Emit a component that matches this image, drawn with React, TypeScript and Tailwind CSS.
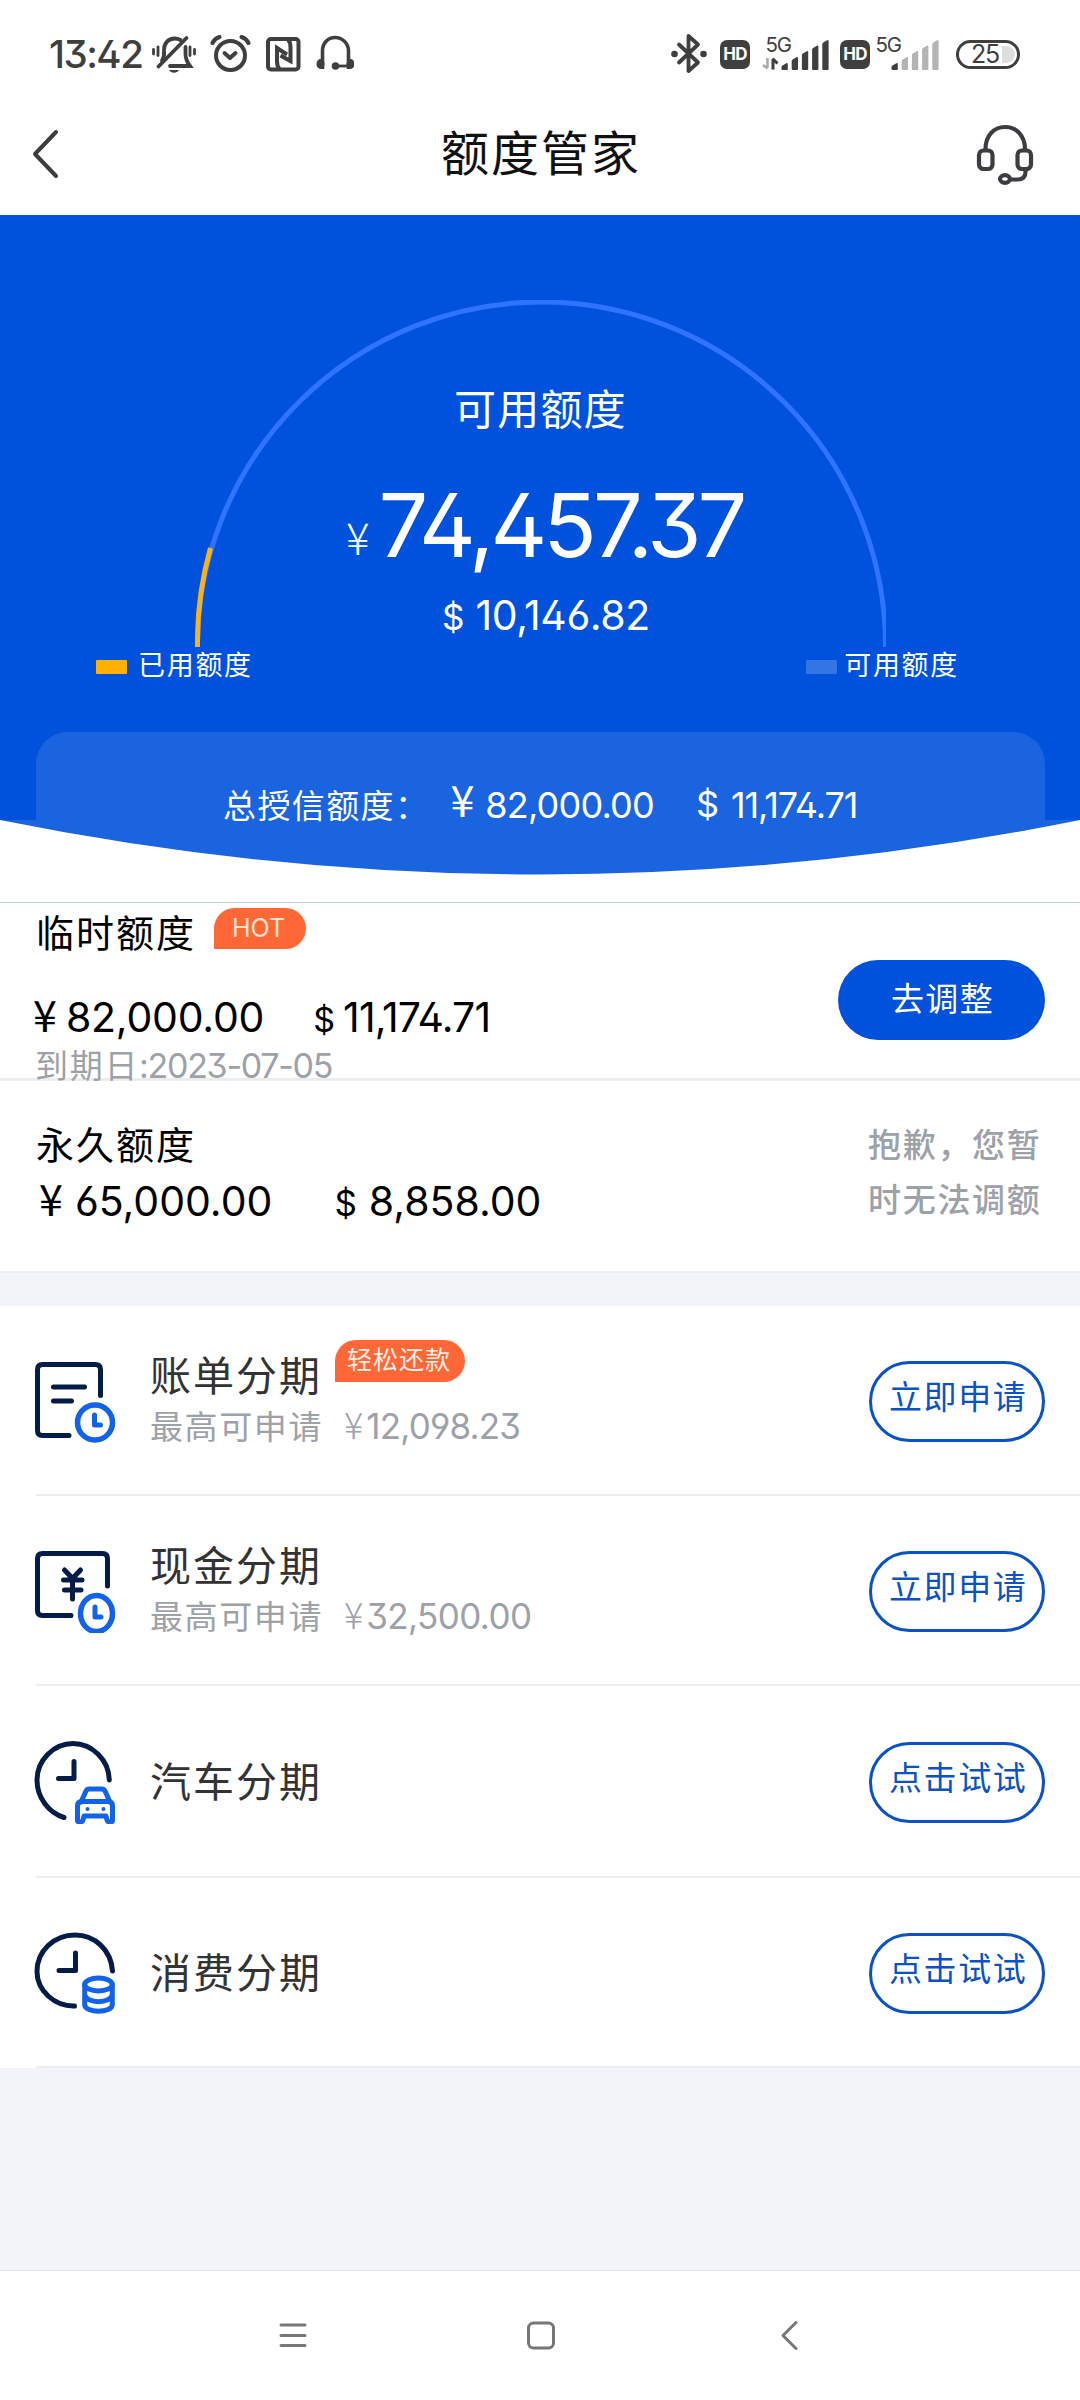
import type { ReactNode } from 'react';

interface Plan {
  title: string;
  limit?: string;
  limitClass?: string;
  badge?: string;
  action: string;
  rowClass: string;
  icon: ReactNode;
}

const NAVY = '#051c48';
const BLUE = '#1263ea';

function Yen({ className = '' }: { className?: string }) {
  return <span className={`font-['Noto_Sans_CJK_SC',sans-serif] leading-none tracking-normal ${className}`}>¥</span>;
}

function Dollar({ className = '' }: { className?: string }) {
  return <span className={`leading-none tracking-normal ${className}`}>$</span>;
}

function SignalBars({ active, arrows }: { active: number; arrows?: boolean }) {
  const tops = [33, 27, 21, 15.5, 10];
  return (
    <svg className="h-12 w-[67px] shrink-0" viewBox="0 0 67 48">
      <text x="3.5" y="22" fontSize="20.5" letterSpacing="-1.2" fill="#3f3f3f" fontFamily="Inter, sans-serif">
        5G
      </text>
      {arrows && (
        <>
          <path d="M5.5 28v9.500M5.500 38.500l-4.500-3.500" stroke="#aaa" strokeWidth="2.600" fill="none" />
          <path d="M11 39.500V29M10.500 28.500l5 5" stroke="#3f3f3f" strokeWidth="3" fill="none" />
        </>
      )}
      {tops.map((top, i) => {
        const x = 19.5 + i * 10.2;
        return (
          <path
            key={top}
            d={`M${x} ${top + 4}q0-1 1-1.500l3.800-2.300q1.500-.6 1.500 1V39q0 1-1 1h-4.300q-1 0-1-1z`}
            fill={i < active ? '#3f3f3f' : '#b4b4b4'}
          />
        );
      })}
    </svg>
  );
}

function HdBadge() {
  return (
    <span className="flex h-[29px] w-[30px] shrink-0 items-center justify-center rounded-[7px] bg-[#3f3f3f] text-[17px] leading-none font-bold tracking-[-0.8px] text-white">
      HD
    </span>
  );
}

function StatusBar() {
  return (
    <div className="flex h-[108px] items-center pr-[60px] pl-[49px] text-[#3f3f3f]">
      <span className="w-[101px] text-[38.5px] leading-none font-medium tracking-[-1.5px]">13:42</span>
      <svg className="h-12 w-12 shrink-0" viewBox="0 0 48 48" fill="none" stroke="currentColor" strokeWidth="3.800" strokeLinecap="round">
        <path d="M14 25v-5c0-7 4.500-11.500 10.500-11.500 2.500 0 4.500.7 6 1.500" />
        <path d="M35.500 17v7c0 5 1.500 8 4.500 12H20" />
        <path d="M8.500 36.500 36.500 8" />
        <path d="M14 24c0 3-1 5-2 6.500" />
        <path d="M19 40h10c-2 3.500-8 3.500-10 0z" fill="currentColor" stroke="none" />
        <path d="M3.500 19.500v4.500M8 17v8.500M40 17v8.500M44.500 19.500v4.500" strokeWidth="2.800" />
      </svg>
      <svg className="ml-3 h-12 w-[41px] shrink-0" viewBox="0 0 41 48" fill="none" stroke="currentColor" strokeWidth="4" strokeLinecap="round">
        <circle cx="20.500" cy="25.500" r="14.500" />
        <path d="m14.500 23 5.500 5 5.500-5" strokeLinejoin="round" />
        <path d="M2.500 13c1.500-3 3.500-5 7-6M38.500 13c-1.500-3-3.500-5-7-6" />
      </svg>
      <svg className="ml-[15px] h-12 w-[35px] shrink-0" viewBox="0 0 35 48" fill="none" stroke="currentColor" strokeWidth="4">
        <rect x="2" y="9" width="30.500" height="30.500" rx="3" />
        <path d="M13.500 39c-2-2-2.500-5-2.500-8V18l10 6.500" />
        <path d="M22 9.500c2 2 2.500 5 2.500 8V31l-10-5.500" />
      </svg>
      <svg className="ml-[15px] h-12 w-[38px] shrink-0" viewBox="0 0 38 48" fill="none" stroke="currentColor" strokeWidth="3.600">
        <path d="M6.500 39V21C6.500 13 12 7.500 19 7.500S32.500 13 32.500 21v18" />
        <ellipse cx="4.500" cy="34" rx="4" ry="5" fill="currentColor" stroke="none" />
        <ellipse cx="34.500" cy="34" rx="4" ry="5" fill="currentColor" stroke="none" />
        <circle cx="19.500" cy="36" r="3.800" fill="currentColor" stroke="none" />
        <path d="M19 36h14" strokeWidth="2.800" />
      </svg>

      <svg className="ml-auto h-12 w-[37px] shrink-0" viewBox="0 0 37 48" fill="none" stroke="currentColor" strokeWidth="3.800" strokeLinecap="round" strokeLinejoin="round">
        <path d="M8 14.500 27 32.500 17.500 41V6L27 14.500 8 32.500" />
        <circle cx="3.500" cy="24" r="3.300" fill="currentColor" stroke="none" />
        <circle cx="32.500" cy="24" r="3.300" fill="currentColor" stroke="none" />
      </svg>
      <div className="ml-3 flex items-center">
        <HdBadge />
        <div className="ml-3 flex">
          <SignalBars active={5} arrows />
        </div>
      </div>
      <div className="ml-[11px] flex items-center">
        <HdBadge />
        <div className="ml-[2px] flex">
          <SignalBars active={1} />
        </div>
      </div>
      <div className="ml-[17px] flex h-[29px] w-16 shrink-0 items-center rounded-full border-[3px] border-[#3f3f3f] pl-[12px]">
        <span className="text-[25px] leading-none tracking-[-1.2px]">25</span>
        <span className="ml-[3px] h-[17px] w-[13px] rounded-r-full bg-[#dedede]" />
      </div>
    </div>
  );
}

function NavHeader() {
  return (
    <div className="flex h-[107px] items-center pr-[46px] pb-[16px] pl-[31px]">
      <svg className="h-[50px] w-[60px]" viewBox="0 0 60 50" fill="none" stroke="#3c3d40" strokeWidth="4" strokeLinecap="round" strokeLinejoin="round">
        <path d="M25 3 4 25l21 22" />
      </svg>
      <h1 className="ml-[350px] text-[48px] leading-none tracking-[2px] text-[#111]">额度管家</h1>
      <svg className="mt-[3px] ml-auto h-[62px] w-[60px]" viewBox="975 124 60 62" fill="none" stroke="#3c3d40" strokeWidth="4.200" strokeLinecap="round">
        <path d="M986.500 149c0-13 8-22 19.500-22s20 9 20 22" />
        <rect x="980" y="150.500" width="13.500" height="18.500" rx="4.500" />
        <rect x="1018.500" y="150.500" width="13.500" height="18.500" rx="4.500" />
        <path d="M1026.500 170v2c0 5-3 7.500-7.500 7.500h-6.500" />
        <ellipse cx="1006" cy="179" rx="5" ry="3.800" />
      </svg>
    </div>
  );
}

function CreditHero() {
  return (
    <section>
      <div className="relative h-[605px] bg-[#0052dc] text-white">
        <svg className="absolute top-[85px] left-[195px] h-[347px] w-[691px]" viewBox="0 0 691 347" fill="none" strokeWidth="5">
          <path d="M2.500 347v-1A344 344 0 0 1 690.500 346v1" stroke="#2f74ff" />
          <path d="M2.500 347v-1A344 344 0 0 1 15.500 248" stroke="#f7b21c" />
        </svg>

        <p className="pt-[165px] pl-[454px] text-[42px] leading-[60px] tracking-[1.2px]">可用额度</p>
        <p className="mt-[40px] h-[90px] pl-[346px] text-[88px] leading-[90px] tracking-[-3.9px]">
          <Yen className="relative -top-[2px] mr-[9px] text-[44px] font-light" />
          74,457.37
        </p>
        <p className="mt-5 h-[50px] pl-[442px] text-[41px] leading-[50px] tracking-[-0.4px]">
          <Dollar className="mr-[11px] text-[35px]" />
          10,146.82
        </p>

        <div className="mt-[6px] flex h-10 items-center justify-between pr-[121px] pl-[96px] text-[27px] tracking-[1.7px]">
          <div className="flex items-center">
            <span className="mt-[2px] mr-[11px] h-[14px] w-[31px] rounded-[1px] bg-[#ffb000]" />
            <span className="leading-10">已用额度</span>
          </div>
          <div className="flex items-center">
            <span className="mt-[2px] mr-[7px] h-[14px] w-[31px] rounded-[1px] bg-[#3375e3]" />
            <span className="leading-10">可用额度</span>
          </div>
        </div>

        <div className="mt-[46px] mr-[35px] ml-9 h-[88px] rounded-t-[32px] bg-[#1b64df] pt-[46px] pl-[187px]">
          <p className="relative z-10 h-9 text-[36px] leading-[36px] tracking-[-0.8px] whitespace-nowrap">
            <span className="text-[33px] tracking-[1.4px]">总授信额度：</span>
            <Yen className="relative -top-px mr-[11px] ml-[21px] text-[43px]" />
            82,000.00
            <Dollar className="relative -top-px mr-[12px] ml-[42px] text-[36px]" />
            <span className="tracking-[-1.1px]">11,174.71</span>
          </p>
        </div>
      </div>
      <svg className="block h-[82px] w-full" viewBox="0 0 1080 82">
        <path d="M0 0Q540 109 1080 0z" fill="#1b64df" />
      </svg>
    </section>
  );
}

function TemporaryLimit() {
  return (
    <section className="flex h-[179px] items-start border-t border-b-[3px] border-t-[#c5d0d3] border-b-[#ecedef] pr-[35px]">
      <div className="flex-1">
        <div className="flex items-start pl-9">
          <h2 className="text-[38px] leading-[60px] tracking-[2px]">临时额度</h2>
          <span className="mt-[5px] ml-[18px] h-[41px] w-[92px] rounded-[21px] rounded-bl-none bg-[#ff6836] pl-[18px] text-[25px] leading-[41px] text-[#ffe1d6]">
            HOT
          </span>
        </div>
        <p className="mt-[29px] h-[50px] pl-[33px] text-[41px] leading-[50px] tracking-[-0.2px]">
          <Yen className="mr-[9px] text-[43px]" />
          82,000.00
          <Dollar className="mr-[8px] ml-[49px] text-[34px]" />
          <span className="tracking-[-0.9px]">11,174.71</span>
        </p>
        <p className="mt-px h-[35px] pl-[35px] text-[34px] leading-[46px] tracking-[-1.300px] text-[#9da1a8]">
          <span className="text-[33px] tracking-[1.7px]">到期日</span>:2023-07-05
        </p>
      </div>
      <button className="mt-[57px] h-20 w-[207px] rounded-full bg-[#0052dc] pb-[1px] pl-[2px] text-[33px] leading-none tracking-[1.4px] text-white">
        去调整
      </button>
    </section>
  );
}

function PermanentLimit() {
  return (
    <section className="flex h-[190px] items-start justify-between pr-[37px]">
      <div className="pt-[39px]">
        <h2 className="pl-9 text-[38px] leading-[50px] tracking-[2px]">永久额度</h2>
        <p className="mt-[6px] h-[50px] pl-[39px] text-[41px] leading-[50px] tracking-normal">
          <Yen className="mr-3 text-[43px]" />
          65,000.00
          <Dollar className="mr-[12px] ml-[62px] text-[35px]" />
          <span className="tracking-normal">8,858.00</span>
        </p>
      </div>
      <p className="mt-[37px] w-[175px] text-[33px] leading-[55px] font-medium tracking-[1.7px] text-[#9da1a8]">
        抱歉，您暂时无法调额
      </p>
    </section>
  );
}

// Icon artwork is drawn on an 84px grid, navy outline with a blue accent.
const plans: Plan[] = [
  {
    title: '账单分期',
    limit: '12,098.23',
    limitClass: 'tracking-[-0.8px]',
    badge: '轻松还款',
    action: '立即申请',
    rowClass: 'h-[190px]',
    icon: (
      <>
        <path d="M67.500 36.500V10.500q0-5-5-5H9.500q-5 0-5 5v61q0 5 5 5H36" stroke={NAVY} />
        <path d="M20.500 28h31M20.500 42h18" stroke={NAVY} />
        <circle cx="62" cy="63.500" r="17.500" stroke={BLUE} strokeWidth="5.500" />
        <path d="M61.500 56v10h6" stroke={BLUE} />
      </>
    ),
  },
  {
    title: '现金分期',
    limit: '32,500.00',
    limitClass: 'tracking-[-0.6px]',
    action: '立即申请',
    rowClass: 'h-[190px]',
    icon: (
      <>
        <path d="M74.500 37V9.500q0-5-5-5h-60q-5 0-5 5v52q0 5 5 5H38" stroke={NAVY} />
        <path d="m31.500 21 8 8.500 8-8.500M39.500 30v20M30.500 31h18.500M31.500 41h16.500" stroke={NAVY} />
        <ellipse cx="63.500" cy="64.500" rx="16" ry="18" stroke={BLUE} strokeWidth="5.500" />
        <path d="M62 58v10h6" stroke={BLUE} />
      </>
    ),
  },
  {
    title: '汽车分期',
    action: '点击试试',
    rowClass: 'h-[192px]',
    icon: (
      <>
        <path d="M76.300 40C76 20 59 3.500 40 3.500S4 20 4 40c0 18 12 33 27 37.500" stroke={NAVY} />
        <path d="M41 21.500v17H25.500" stroke={NAVY} />
        <path d="m48 62 5-11q1-2 3-2h13q2 0 3 2l5 11" stroke={BLUE} />
        <path d="M44.500 80.500V66q0-4.500 4.500-4.500h26q4.500 0 4.500 4.500v14.500q0 1.500-2.500 1.500t-3-2l-1-4H51l-1 4q-.5 2-3 2t-2.500-1.500z" stroke={BLUE} />
        <path d="M54.500 69v.1M70.500 69v.1" stroke={BLUE} strokeWidth="4" />
      </>
    ),
  },
  {
    title: '消费分期',
    action: '点击试试',
    rowClass: 'h-[190px]',
    icon: (
      <>
        <path d="M79.500 40C78 19 62 4 42 4 21 4 4 20 4 40.500 4 60 22 75.500 41.500 75" stroke={NAVY} />
        <path d="M42.500 22v17.500H26" stroke={NAVY} />
        <ellipse cx="65.500" cy="53.500" rx="13.800" ry="6.500" stroke={BLUE} />
        <path d="M51.700 53.500v20c0 9 27.600 9 27.600 0v-20M51.700 63.500c1 9.500 26.600 9.500 27.600 0" stroke={BLUE} />
      </>
    ),
  },
];

function PlanRow({ plan }: { plan: Plan }) {
  return (
    <li className={`flex items-center border-b-2 border-[#ecedef] pt-[2px] pr-[35px] ${plan.rowClass}`}>
      <svg className="-ml-[3px] h-[84px] w-[84px] shrink-0" viewBox="0 0 84 84" fill="none" strokeWidth="5" strokeLinecap="round" strokeLinejoin="round">
        {plan.icon}
      </svg>
      <div className="ml-[33px] flex-1">
        <div className="flex h-[50px] items-start">
          <h3 className="text-[41px] leading-[50px] tracking-[2px] text-[#333]">{plan.title}</h3>
          {plan.badge && (
            <span className="-mt-[11px] ml-[13px] h-[42px] w-[130px] rounded-[21px] rounded-bl-none bg-[#ff6836] pl-[12px] text-[25px] leading-[41px] tracking-[1px] text-[#ffeee8]">
              {plan.badge}
            </span>
          )}
        </div>
        {plan.limit && (
          <p className={`h-[50px] text-[35px] leading-[50px] text-[#9da1a8] ${plan.limitClass}`}>
            <span className="text-[33px] tracking-[1.6px]">最高可申请</span>
            <Yen className="mr-[3px] ml-[21px] text-[36px] font-light" />
            {plan.limit}
          </p>
        )}
      </div>
      <button className="flex h-[81px] w-[176px] items-center rounded-full border-[3px] border-[#0a52c6] pb-[7px] pl-[17px] text-[33px] leading-none tracking-[1.6px] whitespace-nowrap text-[#0a52c6]">
        {plan.action}
      </button>
    </li>
  );
}

function SystemNav() {
  return (
    <div className="flex h-[130px] items-center justify-between border-t border-[#dfe3e5] bg-white pr-[271px] pl-[273px]">
      <svg className="h-10 w-10" viewBox="0 0 40 40" fill="none" stroke="#777" strokeWidth="3" strokeLinecap="round">
        <path d="M8 9h24M8 19.500h24M8 29.500h24" />
      </svg>
      <svg className="h-10 w-10" viewBox="0 0 40 40" fill="none" stroke="#777" strokeWidth="3">
        <rect x="7.500" y="7" width="25" height="25" rx="5" />
      </svg>
      <svg className="h-10 w-10" viewBox="0 0 40 40" fill="none" stroke="#777" strokeWidth="3" strokeLinecap="round" strokeLinejoin="round">
        <path d="M27 6.500 14 19.500l13 13" />
      </svg>
    </div>
  );
}

export default function App() {
  return (
    <div className="flex h-[2400px] w-[1080px] flex-col overflow-hidden bg-white font-['Inter','Noto_Sans_CJK_SC',sans-serif] text-black [font-feature-settings:'ss01','cv09']">
      <StatusBar />
      <NavHeader />
      <CreditHero />
      <TemporaryLimit />
      <PermanentLimit />
      <div className="h-[35px] border-t-2 border-[#ebecef] bg-[#f2f4f9]" />
      <ul className="pl-9">
        {plans.map((plan) => (
          <PlanRow key={plan.title} plan={plan} />
        ))}
      </ul>
      <div className="flex-1 bg-[#f2f4f9]" />
      <SystemNav />
    </div>
  );
}
